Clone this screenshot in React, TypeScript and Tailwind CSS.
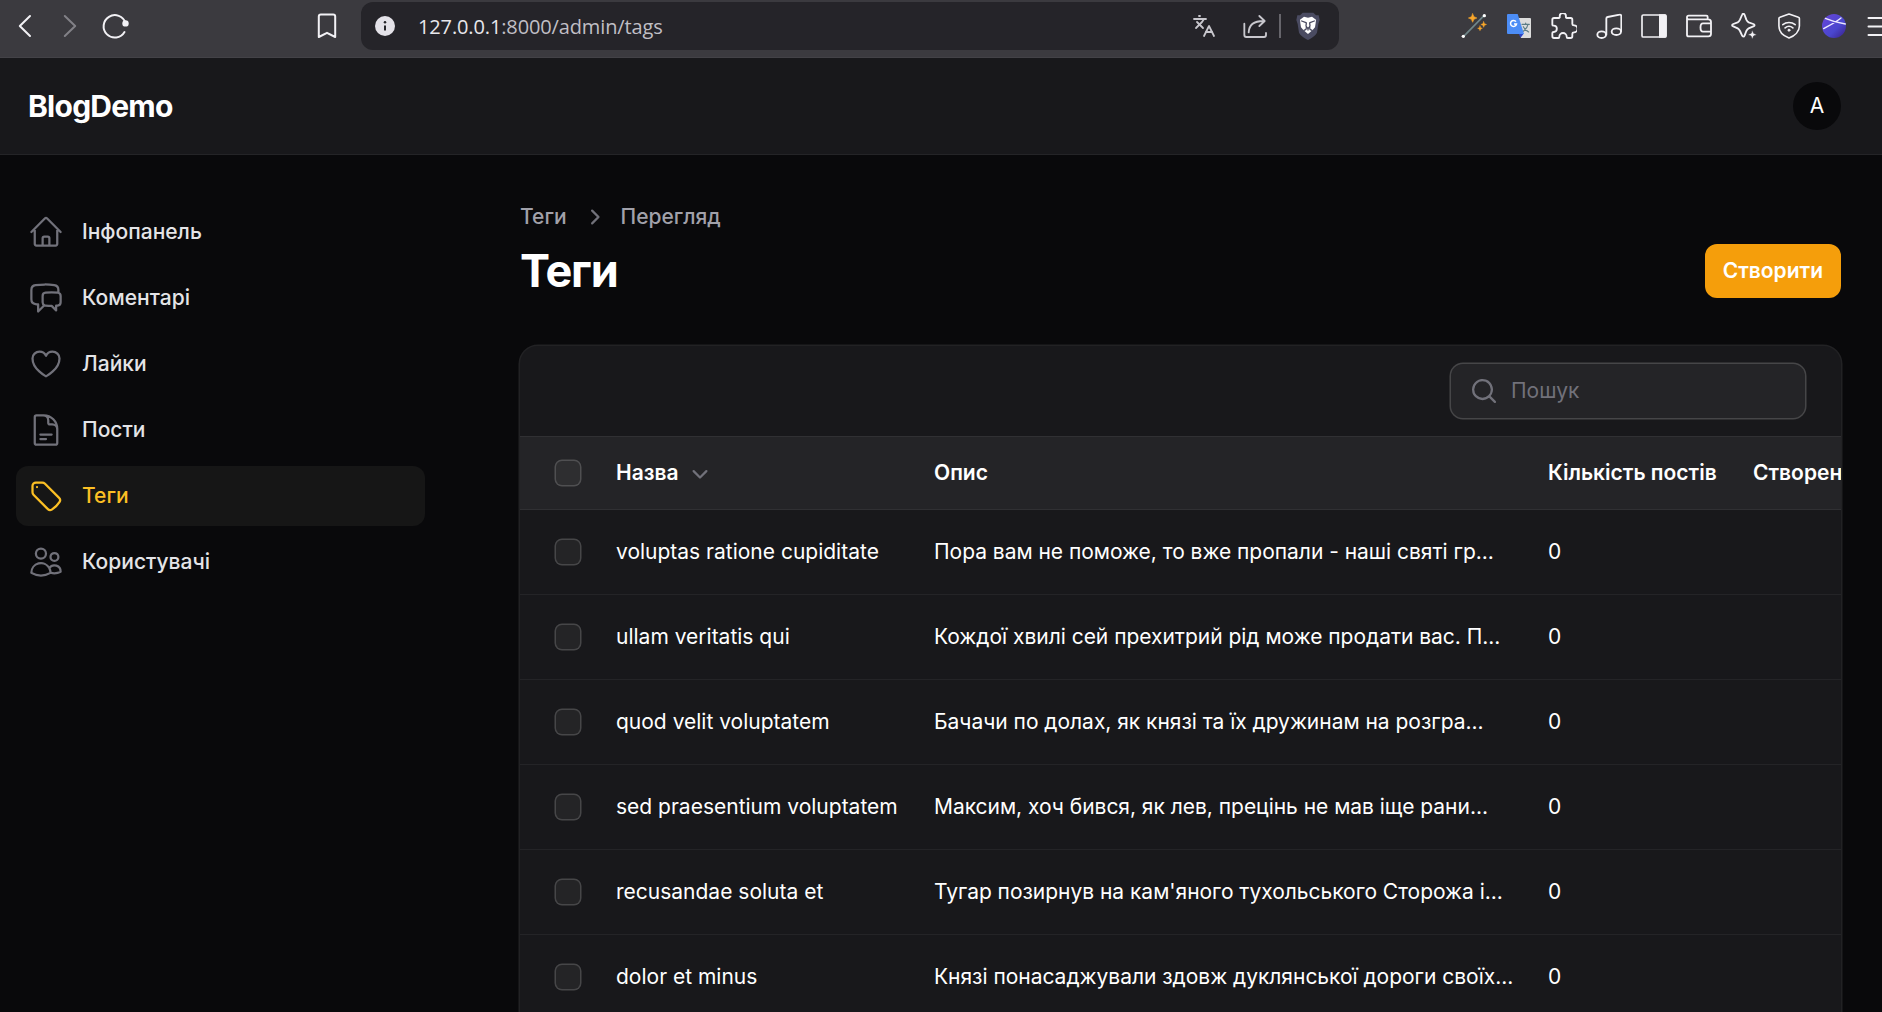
import React from 'react';
import {
  HiOutlineHome,
  HiOutlineChatBubbleLeftRight,
  HiOutlineHeart,
  HiOutlineDocumentText,
  HiOutlineTag,
  HiOutlineUsers,
  HiMiniChevronRight,
  HiMiniChevronDown,
  HiMiniMagnifyingGlass,
} from 'react-icons/hi2';
import { Languages } from 'lucide-react';

type GlyphProps = {
  box: string;
  className?: string;
  children: React.ReactNode;
};

function Glyph({ box, className = '', children }: GlyphProps) {
  return (
    <svg
      viewBox={box}
      fill="none"
      stroke="currentColor"
      strokeLinecap="round"
      strokeLinejoin="round"
      className={`block shrink-0 ${className}`}
    >
      {children}
    </svg>
  );
}

function BraveLion() {
  return (
    <Glyph box="0 0 72 84" className="h-[28px] w-[24px]">
      <path
        d="M20 2h32l8 8 8 0 3 14-4 12-4 26c-4 9-19 18-27 22C28 80 13 71 9 62L5 36 1 24 4 10h8Z"
        fill="#4a4b61"
        stroke="none"
      />
      <path
        d="M24 14l12 3 12-3 12 9-1 10-2 13-7 8-14 12-14-12-7-8-2-13-1-10Z"
        fill="#fff"
        stroke="none"
      />
      <path
        d="M17 27l13 5M55 27l-13 5M31 33l-1 9 3 5M41 33l1 9-3 5M30 48h12M36 48v6M24 55l6-3M48 55l-6-3"
        stroke="#4a4b61"
        strokeWidth="4"
      />
    </Glyph>
  );
}

function Wand() {
  return (
    <Glyph box="903 39 78 78" className="size-[26px]">
      <path d="M911 109L972 47" stroke="#6f8588" strokeWidth="5" />
      <circle cx="910" cy="109" r="5" fill="#fff" stroke="none" />
      <circle cx="973" cy="47" r="5" fill="#fff" stroke="none" />
      <path
        d="M938 41l4 9 9 4-9 4-4 9-4-9-9-4 9-4ZM971 65l2.500 6 6 2.500-6 2.500-2.500 6-2.500-6-6-2.500 6-2.500ZM960 78l2 5 5 2-5 2-2 5-2-5-5-2 5-2Z"
        fill="#f9a72b"
        stroke="#f9a72b"
        strokeWidth="1.500"
      />
    </Glyph>
  );
}

function GoogleTranslate() {
  return (
    <Glyph box="18 39 78 78" className="size-[26px]">
      <path d="M48 54h42a3 3 0 0 1 3 3v54a3 3 0 0 1-3 3H63Z" fill="#dcdcdc" stroke="none" />
      <path d="M66 73h22M77 69v4M84 73c-2 10-8 17-16 22M70 80c4 7 9 12 16 16" stroke="#5d7d86" strokeWidth="3.500" />
      <path d="M55 100h17l-10 13Z" fill="#2d44c4" stroke="none" />
      <path d="M24 42h29l19 60H24a3 3 0 0 1-3-3V45a3 3 0 0 1 3-3Z" fill="#4c8df6" stroke="none" />
      <path d="M48 65a9 9 0 1 0 1.500 7H42" stroke="#fff" strokeWidth="4.500" strokeLinecap="butt" strokeLinejoin="miter" />
    </Glyph>
  );
}

function BrowserBar() {
  return (
    <div className="flex h-[58px] shrink-0 items-start border-b border-[#434247] bg-[#3b3a3f] text-[#f2f1f5]">
      <div className="flex h-[52px] w-[361px] shrink-0 items-center">
        <Glyph box="0 0 26 26" className="ml-[12px] size-[26px]">
          <path d="M18 3L7.800 13 18 23" strokeWidth="2" />
        </Glyph>
        <Glyph box="0 0 26 26" className="ml-[18px] size-[26px] text-[#828187]">
          <path d="M8.800 3L19.200 13 8.800 23" strokeWidth="2" />
        </Glyph>
        <Glyph box="0.500 0 28 28" className="ml-[19px] size-[28px]">
          <path d="M24 20A11.200 11.200 0 1 1 25 11" strokeWidth="2" />
          <circle cx="25" cy="11.400" r="3.200" fill="currentColor" stroke="none" />
        </Glyph>
        <Glyph box="0 0 26 28" className="ml-[185px] h-[28px] w-[26px]">
          <path d="M4.800 4.500a2 2 0 0 1 2-2h12.400a2 2 0 0 1 2 2v20.500L13 20.800 4.800 25Z" strokeWidth="2" />
        </Glyph>
      </div>
      <div className="mt-[2px] flex h-[48px] w-[978px] shrink-0 items-center rounded-xl bg-[#252429]">
        <Glyph box="0 0 20 20" className="ml-[14px] size-[20px]">
          <circle cx="10" cy="10" r="10" fill="#e4e2e8" stroke="none" />
          <path d="M10 9.500v5" stroke="#252429" strokeWidth="2" strokeLinecap="butt" />
          <circle cx="10" cy="6.200" r="1.250" fill="#252429" stroke="none" />
        </Glyph>
        <span className="ml-[23px] w-[774px] pt-[2px] whitespace-nowrap font-['Open_Sans','Noto_Sans',sans-serif] text-[20px] tracking-[-0.13px] text-[#c0bfc5]">
          <span className="text-[#e8e7ec]">127.0.0.1</span>:8000/admin/tags
        </span>
        <Languages className="size-[24px] shrink-0 text-[#c8c7cd]" strokeWidth={1.8} />
        <Glyph box="249 42 75 75" className="ml-[27px] size-[25px] text-[#c8c7cd]">
          <path d="M253 71v34a6 6 0 0 0 6 6h53a6 6 0 0 0 6-6v-6" strokeWidth="5.500" />
          <path d="M266 97c1-20 14-34 44-34M298 48l16 15-16 15" strokeWidth="5.500" />
        </Glyph>
        <span className="ml-[11px] h-[24px] w-[2px] shrink-0 bg-[#66656b]" />
        <div className="ml-[15px]">
          <BraveLion />
        </div>
      </div>
      <div className="ml-[122px] flex h-[52px] shrink-0 items-center gap-[19px]">
        <Wand />
        <GoogleTranslate />
        <Glyph box="153 39 78 78" className="size-[26px]">
          <path
            d="M162 54h14c3 0 4-2 3-5a9.500 9.500 0 0 1 19 0c-1 3 0 5 3 5h11a5 5 0 0 1 5 5v13c0 3 2 4 5 4a10 10 0 0 1 0 21c-3 0-5 1-5 4v8a5 5 0 0 1-5 5h-9c-3 0-3-2-3-4a11 11 0 0 0-22 0c0 2 0 4-3 4h-13a5 5 0 0 1-5-5V99c0-3 2-3 4-3a9 9 0 0 0 0-19c-2 0-4 0-4-3V59a5 5 0 0 1 5-5Z"
            strokeWidth="5.500"
          />
        </Glyph>
        <Glyph box="288 42 78 78" className="size-[26px]">
          <path d="M319 107V59a5 5 0 0 1 4-5l36-7a4 4 0 0 1 5 4v45" strokeWidth="5.500" />
          <ellipse cx="305" cy="107" rx="13" ry="10" strokeWidth="5.500" />
          <ellipse cx="349" cy="98" rx="14" ry="10" strokeWidth="5.500" />
        </Glyph>
        <Glyph box="423 39 78 78" className="size-[26px]">
          <rect x="426" y="45" width="72" height="66" rx="4" strokeWidth="5" />
          <path d="M477 43h18a5 5 0 0 1 5 5v60a5 5 0 0 1-5 5h-18Z" fill="currentColor" stroke="none" />
        </Glyph>
        <Glyph box="558 39 78 78" className="size-[26px]">
          <path
            d="M623 57v-6a4 4 0 0 0-4-4h-53a5 5 0 0 0-5 5v52a5 5 0 0 0 5 5h59a8 8 0 0 0 8-8V66a8 8 0 0 0-8-8h-59a5 5 0 0 1-5-5M633 70h-24c-10 0-10 25 0 25h24"
            strokeWidth="5.500"
          />
        </Glyph>
        <Glyph box="693 39 78 78" className="size-[26px]">
          <path
            d="M726 45c2-5 6-5 8 0l5 14c2 4 3 6 7 8l14 5c5 2 5 5 0 7l-14 6c-4 2-5 4-7 8l-5 13c-2 5-6 5-8 0l-6-13c-2-4-3-6-7-8l-13-6c-5-2-5-5 0-7l13-5c4-2 5-4 7-8Z"
            strokeWidth="5.500"
          />
          <path
            d="M757 90l4 10 10 4-10 4-4 10-4-10-10-4 10-4Z"
            fill="currentColor"
            stroke="#3b3a3f"
            strokeWidth="2"
          />
        </Glyph>
        <Glyph box="828 38 80 80" className="size-[26px]">
          <path d="M868 41l29 10a4 4 0 0 1 3 4v23c0 16-14 30-32 37-18-7-31-21-31-37V55a4 4 0 0 1 3-4Z" strokeWidth="5" />
          <path d="M849 74c11-9 27-9 38 0M856 84c7-6 17-6 24 0" strokeWidth="5" />
          <circle cx="868" cy="91" r="3.500" fill="currentColor" stroke="currentColor" strokeWidth="2" />
        </Glyph>
        <Glyph box="963 39 78 78" className="size-[26px]">
          <defs>
            <linearGradient id="planet" x1="0" y1="0" x2="1" y2="1">
              <stop offset="0" stopColor="#6a45d8" />
              <stop offset="0.600" stopColor="#4a47cf" />
              <stop offset="1" stopColor="#3a1f86" />
            </linearGradient>
          </defs>
          <circle cx="1002" cy="78" r="36" fill="url(#planet)" stroke="none" />
          <path d="M971 86c18-10 38-20 52-32M976 55c14 6 36 13 60 17" stroke="#eceaff" strokeWidth="4" />
        </Glyph>
        <Glyph box="0 0 26 26" className="size-[26px]">
          <path d="M2.500 5h22M2.500 13.500h22M2.500 22h22" strokeWidth="2" />
        </Glyph>
      </div>
    </div>
  );
}

const navItems = [
  { label: 'Інфопанель', Icon: HiOutlineHome },
  { label: 'Коментарі', Icon: HiOutlineChatBubbleLeftRight },
  { label: 'Лайки', Icon: HiOutlineHeart },
  { label: 'Пости', Icon: HiOutlineDocumentText },
  { label: 'Теги', Icon: HiOutlineTag, active: true },
  { label: 'Користувачі', Icon: HiOutlineUsers },
];

function Sidebar() {
  return (
    <nav className="flex w-[425px] shrink-0 flex-col gap-[6px] pt-[47px] pl-4">
      {navItems.map(({ label, Icon, active }) => (
        <a
          key={label}
          className={`flex h-[60px] items-center gap-[18px] rounded-xl px-3 font-medium ${
            active ? 'bg-[#161616] text-[#fbbf24]' : 'text-[#e4e4e7]'
          }`}
        >
          <Icon className={`size-[36px] shrink-0 ${active ? 'text-[#fbbf24]' : 'text-[#71717a]'}`} />
          {label}
        </a>
      ))}
    </nav>
  );
}

function Checkbox({ head = false }: { head?: boolean }) {
  return (
    <span
      className={`mx-9 size-6 shrink-0 rounded-md ${
        head
          ? 'bg-[#2e2e30] shadow-[0_0_0_1.5px_#4f4f51]'
          : 'bg-[#242426] shadow-[0_0_0_1.5px_#464648]'
      }`}
    />
  );
}

const rows = [
  ['voluptas ratione cupiditate', 'Пора вам не поможе, то вже пропали - наші святі гр...'],
  ['ullam veritatis qui', 'Кождої хвилі сей прехитрий рід може продати вас. П...'],
  ['quod velit voluptatem', 'Бачачи по долах, як князі та їх дружинам на розгра...'],
  ['sed praesentium voluptatem', 'Максим, хоч бився, як лев, прецінь не мав іще рани...'],
  ['recusandae soluta et', "Тугар позирнув на кам'яного тухольського Сторожа і..."],
  ['dolor et minus', 'Князі понасаджували здовж дуклянської дороги своїх...'],
];

function TagsTable() {
  return (
    <section className="mt-12 flex-1 overflow-hidden rounded-t-[18px] bg-[#18181b] shadow-[0_0_0_1.5px_#222224]">
      <div className="flex h-[90px] items-center justify-end pr-9">
        <div className="flex h-[54px] w-[354px] items-center rounded-xl bg-[#242427] pl-[18px] shadow-[0_0_0_1.5px_#464648]">
          <HiMiniMagnifyingGlass className="size-[30px] text-[#71717a]" />
          <span className="ml-3 text-[#71717a]">Пошук</span>
        </div>
      </div>
      <div className="flex h-[74px] items-center border-y border-[#303033] bg-[#242427] font-semibold whitespace-nowrap text-white">
        <Checkbox head />
        <div className="flex w-[318px] shrink-0 items-center gap-[6px]">
          Назва
          <HiMiniChevronDown className="size-[30px] text-[#71717a]" />
        </div>
        <div className="w-[614px] shrink-0">Опис</div>
        <div className="w-[205px] shrink-0">Кількість постів</div>
        <div className="shrink-0">Створен</div>
      </div>
      {rows.map(([name, description]) => (
        <div key={name} className="flex h-[85px] items-center border-b border-[#242427] whitespace-nowrap text-white">
          <Checkbox />
          <div className="w-[318px] shrink-0">{name}</div>
          <div className="w-[614px] shrink-0 tracking-[-0.025px]">{description}</div>
          <div>0</div>
        </div>
      ))}
    </section>
  );
}

export default function App() {
  return (
    <div className="flex h-[1012px] w-[1882px] flex-col overflow-hidden bg-[#09090b] font-['Inter',sans-serif] text-[21px] leading-[30px]">
      <BrowserBar />
      <header className="flex h-[97px] shrink-0 items-center justify-between border-b border-[#242427] bg-[#18181b] pr-[41px] pl-[28px]">
        <span className="text-[30px] leading-[30px] font-bold tracking-[-0.75px] text-white">BlogDemo</span>
        <span className="flex size-[48px] items-center justify-center rounded-full bg-[#09090b] text-[21px] text-white">
          A
        </span>
      </header>
      <div className="flex min-h-0 flex-1">
        <Sidebar />
        <main className="ml-[95px] flex w-[1321px] shrink-0 flex-col pt-[47px]">
          <div className="flex h-[30px] shrink-0 items-center gap-3 font-medium text-[#a1a1aa]">
            <span>Теги</span>
            <HiMiniChevronRight className="size-[30px] text-[#71717a]" />
            <span>Перегляд</span>
          </div>
          <div className="mt-3 flex h-[54px] shrink-0 items-center justify-between">
            <h1 className="text-[45px] leading-[54px] font-bold tracking-[-1.125px] text-white">Теги</h1>
            <button className="h-[54px] rounded-xl bg-[#f59e0b] px-[18px] font-semibold text-white">Створити</button>
          </div>
          <TagsTable />
        </main>
      </div>
    </div>
  );
}
